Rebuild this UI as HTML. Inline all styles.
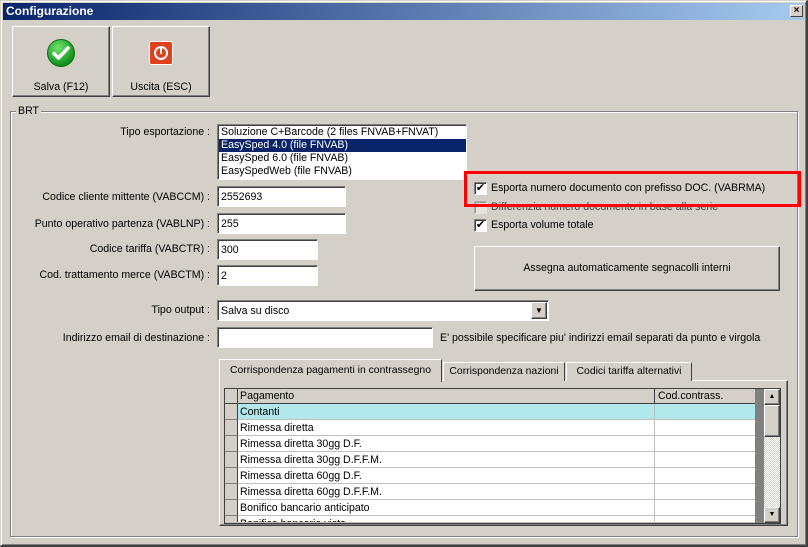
<!DOCTYPE html>
<html><head><meta charset="utf-8"><style>
*{box-sizing:border-box;margin:0;padding:0}
body{width:808px;height:547px;background:#d4d0c8;font-family:"Liberation Sans",sans-serif;font-size:10.6px;color:#000;position:relative;overflow:hidden}
.a{position:absolute}
.win{left:0;top:0;width:808px;height:547px;border:1px solid #d4d0c8;border-right:2px solid #404040;border-bottom:2px solid #404040;box-shadow:inset 1px 1px 0 #fff,inset -1px -1px 0 #808080}
.title{left:3px;top:3px;width:801px;height:17px;background:linear-gradient(90deg,#0a246a,#a6caf0);color:#fff;font-weight:bold;font-size:12px;line-height:17px;padding-left:3px}
.close{left:790px;top:5px;width:13px;height:12px;background:#d4d0c8;border:1px solid;border-color:#fff #404040 #404040 #fff;font-size:10px;line-height:10px;text-align:center;color:#000;font-weight:bold}
.btn{background:#d4d0c8;border:1px solid;border-color:#fff #404040 #404040 #fff;box-shadow:inset -1px -1px 0 #808080;text-align:center}
.inp{background:#fff;border:1px solid;border-color:#808080 #fff #fff #808080;box-shadow:inset 1px 1px 0 #404040;padding-left:3px;padding-top:1px;line-height:18px}
.lbl{text-align:right;width:210px;left:0;white-space:nowrap}
.grp{left:10px;top:111px;width:788px;height:426px;border:1px solid #808080;box-shadow:1px 1px 0 #fff,inset 1px 1px 0 #fff}
.cb{width:13px;height:13px;background:#fff;border:1px solid;border-color:#808080 #fff #fff #808080;box-shadow:inset 1px 1px 0 #404040}
.row{left:225px;width:530px;height:16px;border-bottom:1px solid #c0c0c0;background:#fff}
.row .h{position:absolute;left:0;top:0;width:13px;height:16px;background:#d4d0c8;border-right:1px solid #404040;border-bottom:1px solid #808080}
.row .t{position:absolute;left:15px;top:1px;line-height:14px}
.row .d{position:absolute;left:429px;top:0;width:1px;height:16px;background:#c0c0c0}
.tab{top:362px;height:19px;border:1px solid;border-color:#fff #404040 transparent #fff;border-bottom:none;line-height:17px;text-align:center;background:#d4d0c8;font-size:10.4px;white-space:nowrap}
</style></head><body>
<div class="a win"></div>
<div class="a title">Configurazione</div>
<div class="a close">×</div>

<div class="a btn" style="left:12px;top:26px;width:98px;height:71px"></div>
<svg class="a" style="left:46px;top:38px" width="30" height="30" viewBox="0 0 30 30"><defs><radialGradient id="g" cx="40%" cy="30%" r="70%"><stop offset="0" stop-color="#6fe36f"/><stop offset="1" stop-color="#0b8a14"/></radialGradient></defs><circle cx="15" cy="15" r="13.5" fill="url(#g)" stroke="#0a6e10"/><path d="M8 15.5l4.5 4.5 9.5-10" fill="none" stroke="#fff" stroke-width="3.5" stroke-linecap="round" stroke-linejoin="round"/></svg>
<div class="a" style="left:12px;top:81px;width:98px;text-align:center">Salva (F12)</div>
<div class="a btn" style="left:112px;top:26px;width:98px;height:71px"></div>
<svg class="a" style="left:149px;top:41px" width="24" height="24" viewBox="0 0 24 24"><rect x="0.5" y="0.5" width="23" height="23" rx="2" fill="#e0401c" stroke="#fff"/><circle cx="12" cy="12" r="6" fill="none" stroke="#fff" stroke-width="2"/><line x1="12" y1="7" x2="12" y2="13" stroke="#fff" stroke-width="2"/></svg>
<div class="a" style="left:112px;top:81px;width:98px;text-align:center">Uscita (ESC)</div>

<div class="a grp"></div>
<div class="a" style="left:16px;top:105px;background:#d4d0c8;padding:0 2px">BRT</div>

<div class="a lbl" style="top:126px">Tipo esportazione :</div>
<div class="a inp" style="left:217px;top:124px;width:250px;height:56px;padding:1px 0 0 1px;line-height:13px">
<div style="padding-left:2px">Soluzione C+Barcode (2 files FNVAB+FNVAT)</div>
<div style="padding-left:2px;background:#0a246a;color:#fff">EasySped 4.0 (file FNVAB)</div>
<div style="padding-left:2px">EasySped 6.0 (file FNVAB)</div>
<div style="padding-left:2px">EasySpedWeb (file FNVAB)</div>
</div>

<div class="a lbl" style="top:191px">Codice cliente mittente (VABCCM) :</div>
<div class="a inp" style="left:217px;top:186px;width:129px;height:21px">2552693</div>
<div class="a lbl" style="top:218px">Punto operativo partenza (VABLNP) :</div>
<div class="a inp" style="left:217px;top:213px;width:129px;height:21px">255</div>
<div class="a lbl" style="top:243px">Codice tariffa (VABCTR) :</div>
<div class="a inp" style="left:217px;top:239px;width:101px;height:21px">300</div>
<div class="a lbl" style="top:269px">Cod. trattamento merce (VABCTM) :</div>
<div class="a inp" style="left:217px;top:265px;width:101px;height:21px">2</div>

<div class="a lbl" style="top:304px">Tipo output :</div>
<div class="a inp" style="left:217px;top:300px;width:332px;height:21px">Salva su disco</div>
<div class="a btn" style="left:531px;top:302px;width:16px;height:17px;font-size:8px;line-height:15px">▼</div>
<div class="a lbl" style="top:332px">Indirizzo email di destinazione :</div>
<div class="a inp" style="left:217px;top:327px;width:216px;height:21px"></div>
<div class="a" style="left:440px;top:332px">E' possibile specificare piu' indirizzi email separati da punto e virgola</div>

<div class="a cb" style="left:474px;top:182px;font-size:11px;line-height:10px;text-align:center">✔</div>
<div class="a" style="left:491px;top:182px">Esporta numero documento con prefisso DOC. (VABRMA)</div>
<div class="a cb" style="left:474px;top:201px;opacity:.4"></div>
<div class="a" style="left:491px;top:201px;color:#404040">Differenzia numero documento in base alla serie</div>
<div class="a cb" style="left:474px;top:219px;font-size:11px;line-height:10px;text-align:center">✔</div>
<div class="a" style="left:491px;top:219px">Esporta volume totale</div>
<div class="a" style="left:464px;top:171px;width:337px;height:36px;border:3px solid #f00"></div>
<div class="a btn" style="left:474px;top:246px;width:306px;height:45px;line-height:43px">Assegna automaticamente segnacolli interni</div>

<div class="a" style="left:219px;top:380px;width:569px;height:146px;border:1px solid;border-color:#fff #404040 #404040 #fff;box-shadow:inset -1px -1px 0 #808080"></div>
<div class="a tab" style="left:443px;width:122px">Corrispondenza nazioni</div>
<div class="a tab" style="left:566px;width:126px">Codici tariffa alternativi</div>
<div class="a tab" style="left:219px;top:359px;width:223px;height:23px;line-height:22px;z-index:2">Corrispondenza pagamenti in contrassegno</div>

<div class="a" style="left:224px;top:388px;width:557px;height:136px;border:1px solid #404040;background:#808080;overflow:hidden"></div>
<div class="a" style="left:225px;top:389px;width:530px;height:15px;background:#d4d0c8;border-bottom:1px solid #404040">
<div class="a" style="left:0;top:0;width:13px;height:15px;border-right:1px solid #404040"></div>
<div class="a" style="left:15px;top:1px">Pagamento</div>
<div class="a" style="left:429px;top:0;width:1px;height:15px;background:#404040"></div>
<div class="a" style="left:433px;top:1px">Cod.contrass.</div>
</div>
<div class="a row" style="top:404px;background:#b0e8ec"><div class="h"></div><div class="t">Contanti</div><div class="d"></div></div>
<div class="a row" style="top:420px"><div class="h"></div><div class="t">Rimessa diretta</div><div class="d"></div></div>
<div class="a row" style="top:436px"><div class="h"></div><div class="t">Rimessa diretta 30gg D.F.</div><div class="d"></div></div>
<div class="a row" style="top:452px"><div class="h"></div><div class="t">Rimessa diretta 30gg D.F.F.M.</div><div class="d"></div></div>
<div class="a row" style="top:468px"><div class="h"></div><div class="t">Rimessa diretta 60gg D.F.</div><div class="d"></div></div>
<div class="a row" style="top:484px"><div class="h"></div><div class="t">Rimessa diretta 60gg D.F.F.M.</div><div class="d"></div></div>
<div class="a row" style="top:500px"><div class="h"></div><div class="t">Bonifico bancario anticipato</div><div class="d"></div></div>
<div class="a row" style="top:516px;height:7px;overflow:hidden"><div class="h"></div><div class="t">Bonifico bancario vista</div><div class="d"></div></div>

<div class="a" style="left:764px;top:389px;width:16px;height:134px;background:repeating-conic-gradient(#fff 0 25%,#d4d0c8 0 50%) 0 0/2px 2px"></div>
<div class="a btn" style="left:764px;top:389px;width:16px;height:16px;font-size:7px;line-height:14px">▲</div>
<div class="a btn" style="left:764px;top:405px;width:16px;height:32px"></div>
<div class="a btn" style="left:764px;top:507px;width:16px;height:16px;font-size:7px;line-height:14px">▼</div>
</body></html>
